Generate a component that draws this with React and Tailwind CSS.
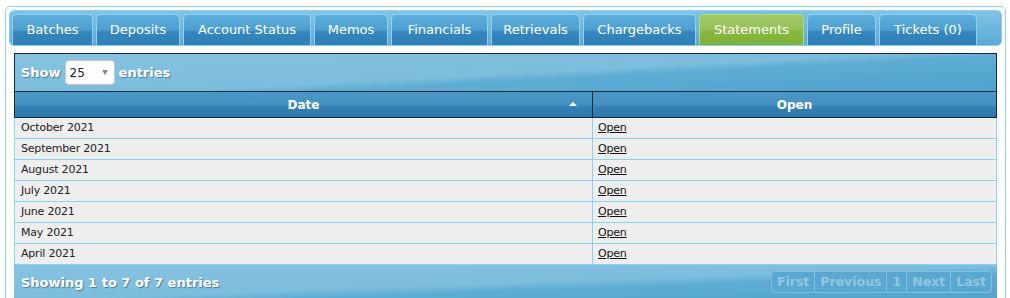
import React from "react";

const tabs = [
  ["Batches", "w-[81px]"],
  ["Deposits", "w-[84px]"],
  ["Account Status", "w-[128px]"],
  ["Memos", "w-[74px]"],
  ["Financials", "w-[97px]"],
  ["Retrievals", "w-[89px]"],
  ["Chargebacks", "w-[113px]"],
  ["Statements", "w-[105px]"],
  ["Profile", "w-[69px]"],
  ["Tickets (0)", "w-[98px]"],
];
const rows = ["October 2021", "September 2021", "August 2021", "July 2021", "June 2021", "May 2021", "April 2021"];

export default function App() {
  return (
    <div className="w-[1010px] h-[298px] bg-white overflow-hidden pt-[6px] pl-[5px]" style={{ fontFamily: '"DejaVu Sans", Verdana, sans-serif' }}>
      <div className="w-[1001px] h-[300px] border border-[#8fd4f5] rounded-[5px] bg-white p-[3px]">
        <div className="h-[36px] rounded-[5px] border border-[#8acdf0] bg-[linear-gradient(to_bottom,#82c3e4,#5ba9d6)] flex items-end gap-[3px] pl-[2px]">
          {tabs.map(([t, w]) => {
            const active = t === "Statements";
            return (
              <div
                key={t}
                className={
                  w +
                  " h-[31px] flex items-center justify-center rounded-t-[5px] border border-b-0 text-white text-[13px] leading-none whitespace-nowrap " +
                  (active
                    ? "border-[#b4dc78] bg-[linear-gradient(to_bottom,#a2c96b_0%,#95c055_50%,#86b63d_56%,#82b23a_100%)]"
                    : "border-[#8ed0f2] bg-[linear-gradient(to_bottom,#5eaedb_0%,#4d9fd0_50%,#3686bd_56%,#2f80b7_100%)]")
                }
              >
                <span className="pb-[1px]">{t}</span>
              </div>
            );
          })}
        </div>
        <div className="pl-[5px] pr-[5px] pt-[7px]">
          <div className="h-[39px] border border-[#17293a] bg-[linear-gradient(177deg,#86c3e1_0%,#7cbcdd_52%,#5eacd4_60%,#4ea2cd_100%)] flex items-center pl-[6px] gap-[4px] text-white font-bold text-[13px] [text-shadow:1px_1px_1px_rgba(0,0,0,0.35)]">
            <span>Show</span>
            <div className="w-[50px] h-[25px] bg-white rounded-[4px] border border-[#c8c8c8] flex items-center justify-between pl-[4px] pr-[6px] text-[#222] font-normal text-[12px] [text-shadow:none]">
              <span>25</span>
              <span className="w-0 h-0 border-l-[3.5px] border-r-[3.5px] border-t-[5px] border-l-transparent border-r-transparent border-t-[#888]" />
            </div>
            <span>entries</span>
          </div>
          <div className="flex h-[26px] border border-t-0 border-[#17293a] bg-[linear-gradient(to_bottom,#4b98c6_0%,#4390c2_50%,#337fb4_62%,#2c79ae_100%)] text-white font-bold text-[12px]">
            <div className="w-[578px] border-r border-[#17293a] flex items-center justify-center relative">
              <span>Date</span>
              <span className="absolute right-[15px] top-[10px] w-0 h-0 border-l-[4px] border-r-[4px] border-b-[4px] border-l-transparent border-r-transparent border-b-white" />
            </div>
            <div className="flex-1 flex items-center justify-center">Open</div>
          </div>
          {rows.map((r) => (
            <div key={r} className="flex h-[21px] bg-[#eeeeee] border-x border-b border-[#88d4f4] text-[#222] text-[11px] tracking-[-0.2px]">
              <div className="w-[578px] border-r border-[#88d4f4] pl-[6px] flex items-center">{r}</div>
              <div className="flex-1 pl-[5px] flex items-center">
                <a href="#" className="underline text-[#111]">Open</a>
              </div>
            </div>
          ))}
          <div className="h-[40px] rounded-b-[5px] bg-[linear-gradient(178deg,#86c3e1_0%,#7cbcdd_48%,#5eacd4_58%,#4ea2cd_100%)] flex items-start justify-between pt-[6px] pl-[7px] pr-[5px]">
            <span className="text-white font-bold text-[13px] pt-[2px] [text-shadow:1px_1px_1px_rgba(0,0,0,0.35)]">Showing 1 to 7 of 7 entries</span>
            <div className="flex h-[22px] rounded-[4px] border border-[#7fbfe0] bg-[#5aa8d2] text-[#92c6e2] font-bold text-[12.5px]">
              {["First", "Previous", "1", "Next", "Last"].map((p, i) => (
                <div key={p} className={"flex items-center px-[5px] " + (i > 0 ? "border-l border-[#7fbfe0]" : "")}>{p}</div>
              ))}
            </div>
          </div>
        </div>
      </div>
    </div>
  );
}
